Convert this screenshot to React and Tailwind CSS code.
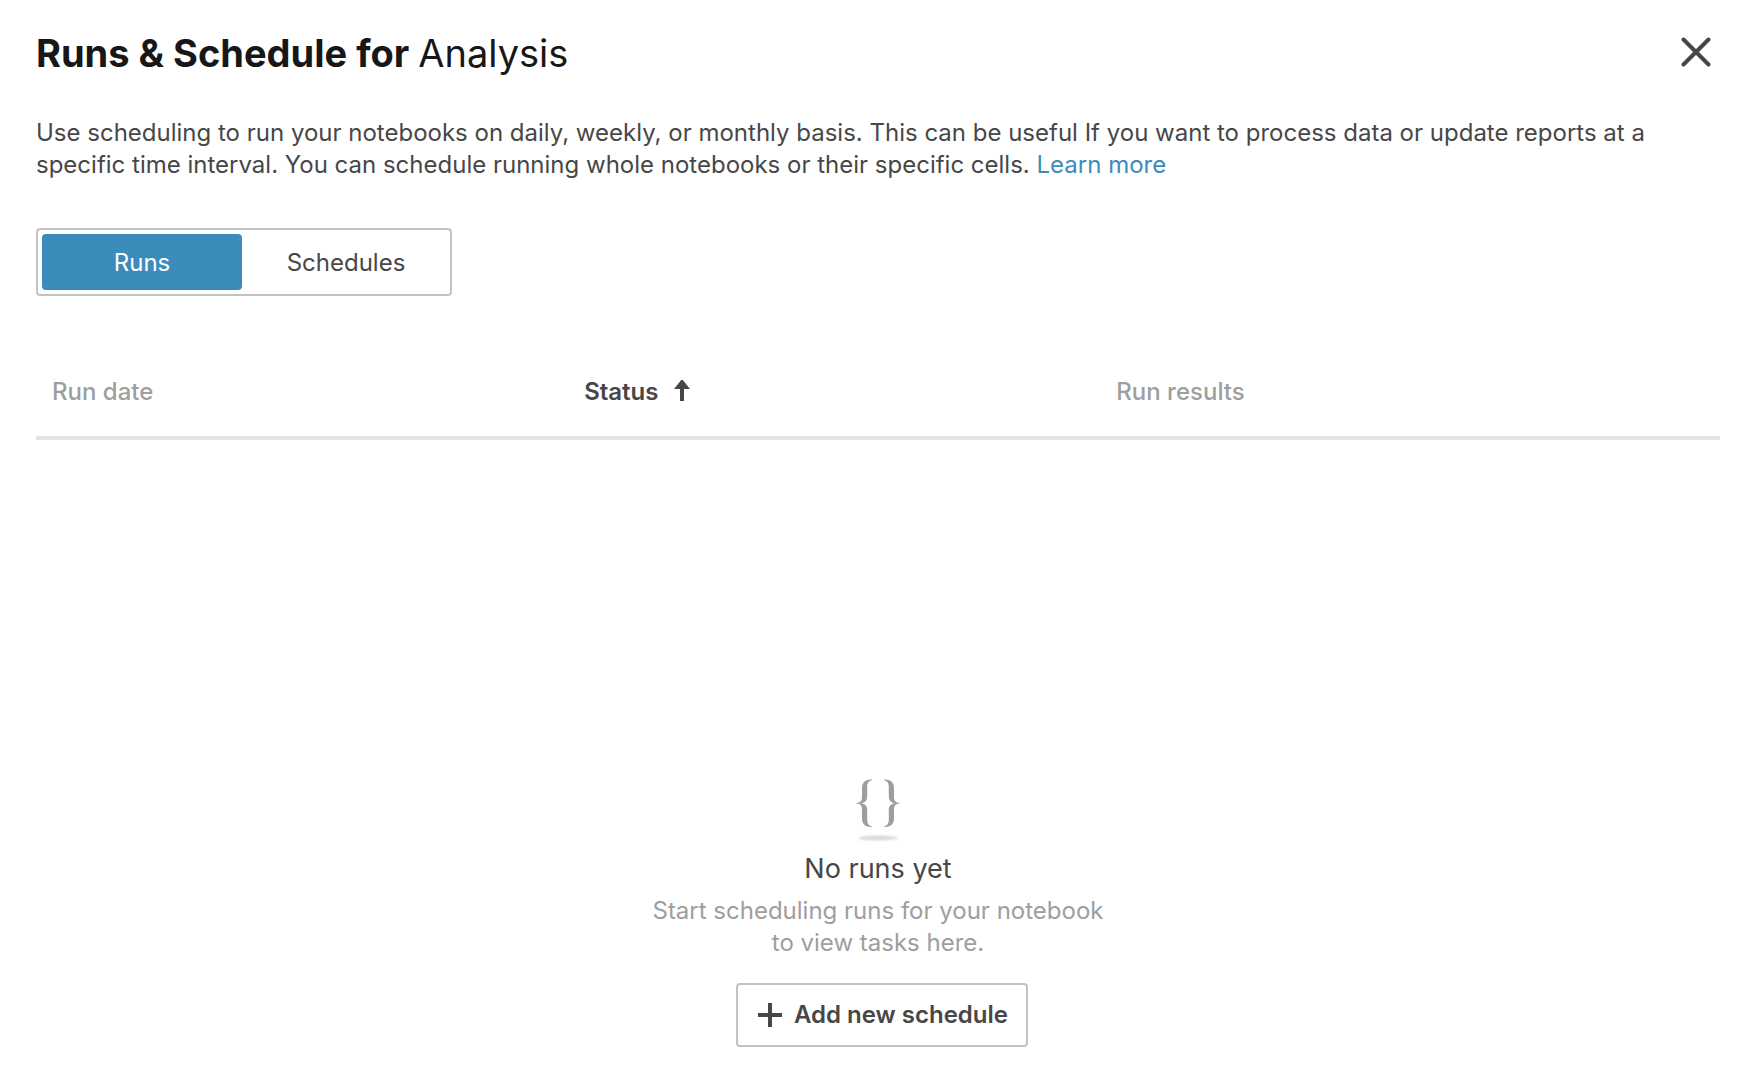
import React, { useState } from 'react';

const tabs = [
  { id: 'runs', label: 'Runs', width: 'w-[200px]' },
  { id: 'schedules', label: 'Schedules', width: 'w-52' },
];

const CloseIcon = () => (
  <svg className="w-8 h-8" viewBox="0 0 32 32" fill="none" stroke="currentColor" strokeWidth="4" strokeLinecap="round" aria-hidden="true">
    <path d="M3.5 2.5 28.5 27.5M28.5 2.500 3.500 27.500" />
  </svg>
);

const SortIcon = () => (
  <svg className="w-4 h-6" viewBox="0 0 16 24" fill="currentColor" aria-hidden="true">
    <path d="M8 -1 16 9H10V21H6V9H0Z" />
  </svg>
);

const PlusIcon = () => (
  <svg className="w-6 h-6" viewBox="0 0 24 24" fill="currentColor" aria-hidden="true">
    <path d="M10 0h4v10h10v4H14v10h-4V14H0v-4h10Z" />
  </svg>
);

const BracesIcon = () => (
  <svg className="w-11 h-16" viewBox="0 0 44 64" aria-hidden="true">
    <defs>
      <filter id="soft" x="-20%" y="-100%" width="140%" height="300%">
        <feGaussianBlur stdDeviation="1.2" />
      </filter>
      <path
        id="brace"
        d="M16 .5V1.2C12.500 2 11.200 4 11.200 8V17C11.200 21.500 9.500 23.500 5 24.300C9.500 25.100 11.200 27.200 11.200 31.500V40.500C11.200 44.500 12.500 46.500 16 47.400V48.100C9.500 48.100 6 45.500 6 39.500V31C6 27 5 25 .5 24.600V24C5 23.600 6 21.600 6 17.600V9C6 3 9.500 .5 16 .5Z"
      />
    </defs>
    <use href="#brace" fill="#9e9e9e" />
    <use href="#brace" fill="#9e9e9e" transform="matrix(-1 0 0 1 44 0)" />
    <ellipse cx="22" cy="59" rx="20" ry="2.600" fill="#dadada" filter="url(#soft)" />
  </svg>
);

const App = () => {
  const [activeTab, setActiveTab] = useState('runs');

  return (
    <main className="min-h-screen bg-white pl-9 pr-[22px] pt-[29px] pb-5 font-['Inter',sans-serif] text-2xl leading-8 text-[#474747]">
      <header className="flex items-center justify-between pr-2">
        <h1 className="text-[38px] leading-[48px] font-bold text-[#171717]">
          Runs &amp; Schedule for <span className="font-normal">Analysis</span>
        </h1>
        <button type="button" aria-label="Close" className="cursor-pointer">
          <CloseIcon />
        </button>
      </header>

      <p className="mt-10 pr-16">
        Use scheduling to run your notebooks on daily, weekly, or monthly basis. This can be useful If you want to process data or update reports at a specific time interval. You can schedule running whole notebooks or their specific cells.{' '}
        <a href="#learn-more" className="text-[#3b8cbb]">Learn more</a>
      </p>

      <div className="mt-[47px] inline-flex rounded border-2 border-[#c2c2c2] py-1 pl-1">
        {tabs.map(tab => (
          <button
            key={tab.id}
            type="button"
            aria-pressed={activeTab === tab.id}
            onClick={() => setActiveTab(tab.id)}
            className={`h-14 rounded pt-0.5 cursor-pointer ${tab.width} ${activeTab === tab.id ? 'bg-[#3b8cbb] text-white' : 'text-[#474747]'}`}
          >
            {tab.label}
          </button>
        ))}
      </div>

      <table className="mt-12 w-full table-fixed text-left">
        <thead>
          <tr className="h-[94px] border-b-4 border-[#e3e3e3] text-[#9e9e9e]">
            <th className="w-[31.6%] px-4 pt-1 font-medium">Run date</th>
            <th className="w-[31.6%] px-4 pt-1 font-semibold text-[#474747]" aria-sort="ascending">
              <button type="button" className="flex items-center gap-4 cursor-pointer">
                Status <SortIcon />
              </button>
            </th>
            <th className="px-4 pt-1 font-medium">Run results</th>
          </tr>
        </thead>
      </table>

      <section className="mt-[339px] flex flex-col items-center text-center">
        <BracesIcon />
        <h2 className="mt-2 text-[27px] leading-9">No runs yet</h2>
        <p className="mt-2 text-[#9e9e9e]">
          Start scheduling runs for your notebook
          <br />
          to view tasks here.
        </p>
        <button type="button" className="mt-6 ml-2 flex h-16 items-center gap-3 rounded border-2 border-[#c2c2c2] pl-5 pr-[18px] font-semibold cursor-pointer">
          <PlusIcon />
          Add new schedule
        </button>
      </section>
    </main>
  );
};

export default App;
